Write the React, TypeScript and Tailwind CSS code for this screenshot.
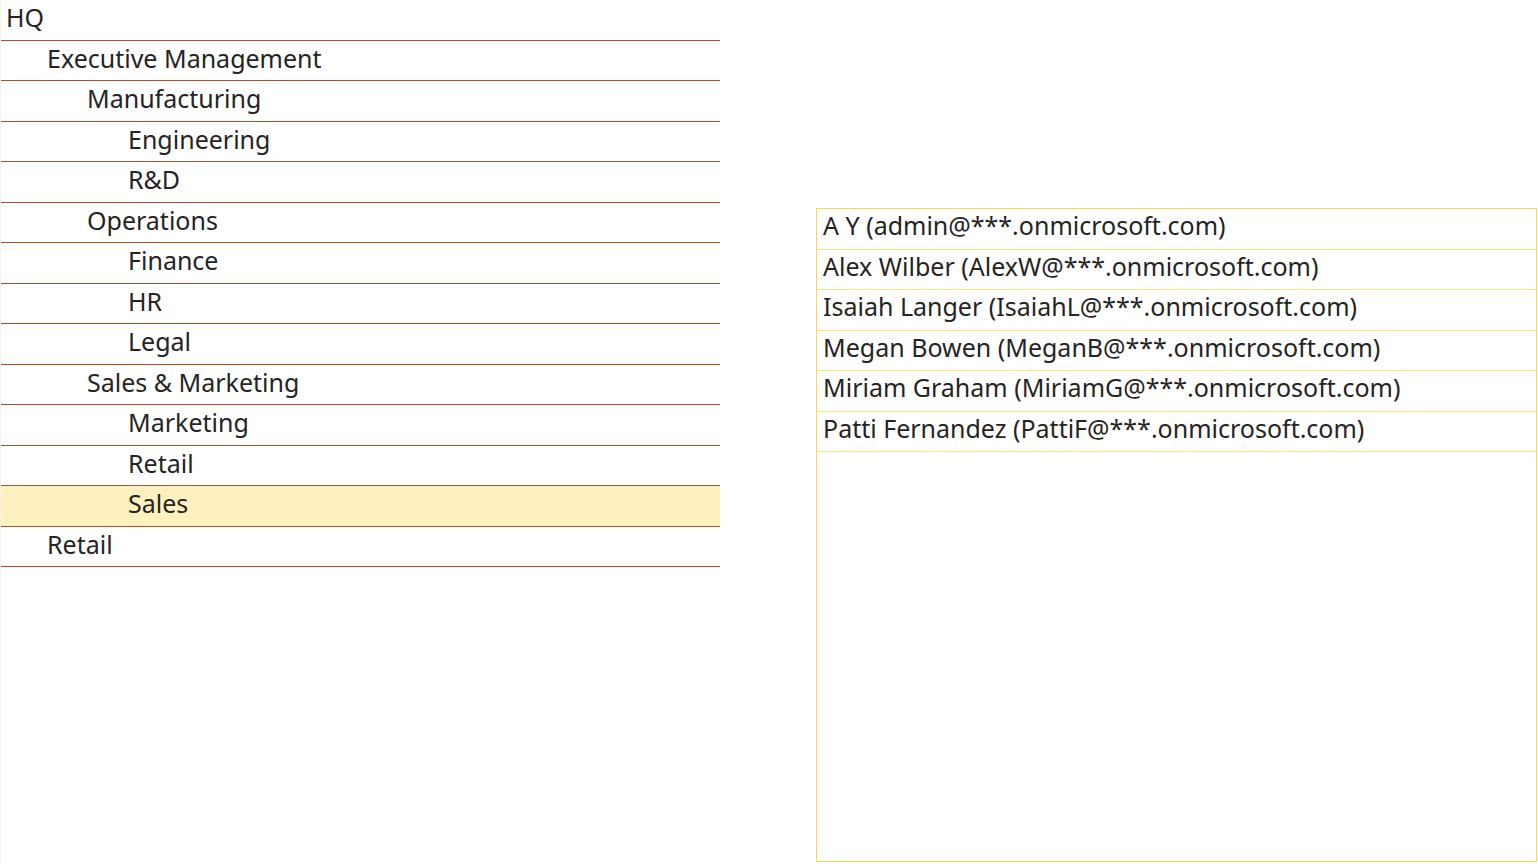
import React from "react";

const tree: { label: string; level: number; selected?: boolean }[] = [
  { label: "HQ", level: 0 },
  { label: "Executive Management", level: 1 },
  { label: "Manufacturing", level: 2 },
  { label: "Engineering", level: 3 },
  { label: "R&D", level: 3 },
  { label: "Operations", level: 2 },
  { label: "Finance", level: 3 },
  { label: "HR", level: 3 },
  { label: "Legal", level: 3 },
  { label: "Sales & Marketing", level: 2 },
  { label: "Marketing", level: 3 },
  { label: "Retail", level: 3 },
  { label: "Sales", level: 3, selected: true },
  { label: "Retail", level: 1 },
];

const users = [
  "A Y (admin@***.onmicrosoft.com)",
  "Alex Wilber (AlexW@***.onmicrosoft.com)",
  "Isaiah Langer (IsaiahL@***.onmicrosoft.com)",
  "Megan Bowen (MeganB@***.onmicrosoft.com)",
  "Miriam Graham (MiriamG@***.onmicrosoft.com)",
  "Patti Fernandez (PattiF@***.onmicrosoft.com)",
];

const pad = ["pl-[5px]", "pl-[46px]", "pl-[86px]", "pl-[127px]"];

export default function App() {
  return (
    <div
      className="flex h-[864px] w-[1538px] bg-white text-[#252423] overflow-hidden"
      style={{ fontFamily: '"Segoe UI", "Noto Sans", "Open Sans", sans-serif' }}
    >
      <div className="w-[720px] h-full border-l border-[#f2f2f2] flex flex-col">
        {tree.map((r, i) => (
          <div
            key={i}
            className={`h-[40.5px] shrink-0 flex items-center border-b border-[#a9532a] text-[25px] leading-none ${pad[r.level]} ${r.selected ? "bg-[#fff0c0]" : ""}`}
          >
            <span className="-mt-[4px]">{r.label}</span>
          </div>
        ))}
      </div>
      <div className="ml-[96px] mt-[208px] w-[721px] h-[654px] border border-[#ffd54f] flex flex-col">
        {users.map((u, i) => (
          <div
            key={i}
            className="h-[40.5px] shrink-0 flex items-center border-b border-[#ffe27a] pl-[6px] text-[25px] leading-none"
          >
            <span className="-mt-[6px]">{u}</span>
          </div>
        ))}
      </div>
    </div>
  );
}
